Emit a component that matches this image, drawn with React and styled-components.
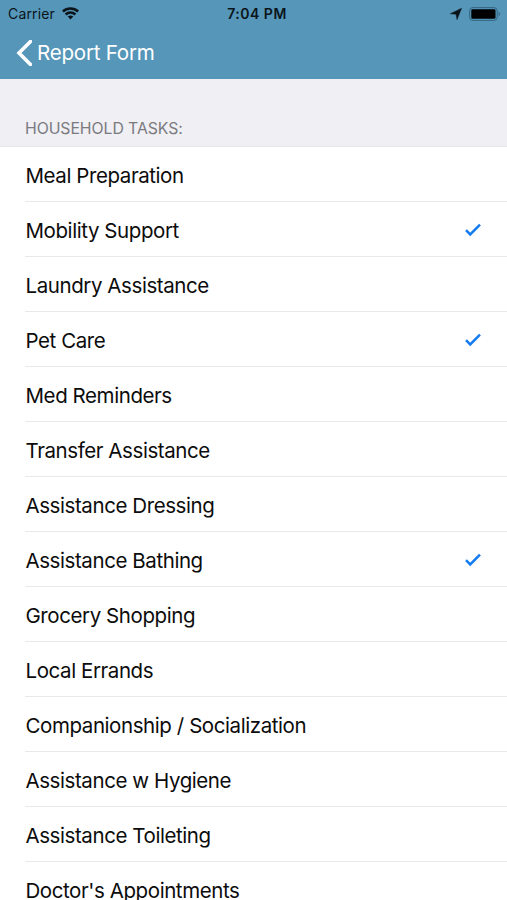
import React from "react";
import styled, { createGlobalStyle } from "styled-components";

const GlobalStyle = createGlobalStyle`
    * {
        box-sizing: border-box;
    }

    body {
        margin: 0;
        background: #fff;
        font-family: Inter, "Liberation Sans", sans-serif;
    }
`;

const Screen = styled.div`
    height: 900px;
    overflow: hidden;
    display: flex;
    flex-direction: column;
`;

const Header = styled.header`
    flex: none;
    height: 79px;
    background: #5596b9;
`;

const StatusBar = styled.div`
    height: 27px;
    padding: 0 6px 0 8px;
    display: grid;
    grid-template-columns: 1fr auto 1fr;
    align-items: center;
    color: #0b141a;
    font-size: 14px;
    line-height: 27px;
`;

const Carrier = styled.div`
    display: flex;
    align-items: center;
    gap: 7px;
    letter-spacing: 0.15px;
`;

const Time = styled.div`
    padding-left: 5px;
    font-size: 14px;
    font-weight: 600;
    letter-spacing: 0.5px;
`;

const StatusIcons = styled.div`
    display: flex;
    align-items: center;
    justify-content: flex-end;
    gap: 7px;
`;

const BackButton = styled.button`
    height: 51px;
    padding: 0 0 0 16px;
    display: flex;
    align-items: center;
    gap: 5px;
    border: none;
    background: none;
    color: #fff;
    font: inherit;
    font-size: 20.6px;
    letter-spacing: -0.25px;
`;

const SectionTitle = styled.h2`
    flex: none;
    height: 68px;
    margin: 0;
    padding: 40px 25px 0;
    background: #efeff4;
    border-bottom: 1px solid #e6e6ea;
    color: #7a7a7f;
    font-size: 15.8px;
    font-weight: 400;
    line-height: 20px;
    letter-spacing: -0.07px;
`;

const TaskList = styled.ul`
    margin: 0;
    padding: 0 0 0 25px;
    list-style: none;
`;

const TaskRow = styled.li`
    height: 55px;
    padding: 2px 25px 0 0.5px;
    display: flex;
    align-items: center;
    justify-content: space-between;
    border-bottom: 1px solid #e9e9eb;
    color: #0c0c0c;
    font-size: 20.5px;
    letter-spacing: -0.42px;
`;

const tasks = [
    { name: "Meal Preparation" },
    { name: "Mobility Support", done: true },
    { name: "Laundry Assistance" },
    { name: "Pet Care", done: true },
    { name: "Med Reminders" },
    { name: "Transfer Assistance" },
    { name: "Assistance Dressing" },
    { name: "Assistance Bathing", done: true },
    { name: "Grocery Shopping" },
    { name: "Local Errands" },
    { name: "Companionship / Socialization" },
    { name: "Assistance w Hygiene" },
    { name: "Assistance Toileting" },
    { name: "Doctor's Appointments" },
];

const WifiIcon = () => (
    <svg width="17" height="13" viewBox="0 0 17 13" fill="none" stroke="#0b141a" strokeWidth="2.4">
        <path d="M0.9 4.5C5.2 0.5 11.8 0.5 16.1 4.5" />
        <path d="M3.6 7.5C6.4 4.9 10.6 4.9 13.4 7.5" />
        <path d="M8.5 12.4L5.7 9.6C7.3 8.2 9.7 8.2 11.3 9.6Z" fill="#0b141a" stroke="none" />
    </svg>
);

const LocationIcon = () => (
    <svg width="12" height="12" viewBox="0 0 12 12">
        <path d="M11.6 0.2L7 11.8L6 6.3L0.2 5.8Z" fill="#0b141a" stroke="#0b141a" strokeWidth="0.4" />
    </svg>
);

const BatteryIcon = () => (
    <svg width="32" height="14" viewBox="0 0 32 14">
        <rect x="0.6" y="0.6" width="27.6" height="12.8" rx="3.2" fill="none" stroke="#356680" />
        <rect x="2.3" y="2.3" width="24.2" height="9.4" rx="1.3" fill="#000" />
        <path d="M29.7 4.8C31.5 5.5 31.5 8.5 29.7 9.2Z" fill="#356680" />
    </svg>
);

const BackIcon = () => (
    <svg width="16" height="26" viewBox="0 0 16 26" fill="none" stroke="#fff" strokeWidth="3.6">
        <path d="M14.5 1.5L3 13L14.5 24.5" strokeLinecap="round" />
    </svg>
);

const CheckIcon = () => (
    <svg width="17" height="14" viewBox="0 0 17 14" fill="none" stroke="#147cf0" strokeWidth="2.5">
        <path d="M1 7.2L5.2 11.4L15 1.6" />
    </svg>
);

const Task = ({ name, done }) => (
    <TaskRow>
        <span>{name}</span>
        {done && <CheckIcon />}
    </TaskRow>
);

export default function App() {
    return (
        <Screen>
            <GlobalStyle />
            <Header>
                <StatusBar>
                    <Carrier>
                        Carrier
                        <WifiIcon />
                    </Carrier>
                    <Time>7:04 PM</Time>
                    <StatusIcons>
                        <LocationIcon />
                        <BatteryIcon />
                    </StatusIcons>
                </StatusBar>
                <BackButton>
                    <BackIcon />
                    Report Form
                </BackButton>
            </Header>
            <SectionTitle>HOUSEHOLD TASKS:</SectionTitle>
            <TaskList>
                {tasks.map(task => (
                    <Task key={task.name} {...task} />
                ))}
            </TaskList>
        </Screen>
    );
}
